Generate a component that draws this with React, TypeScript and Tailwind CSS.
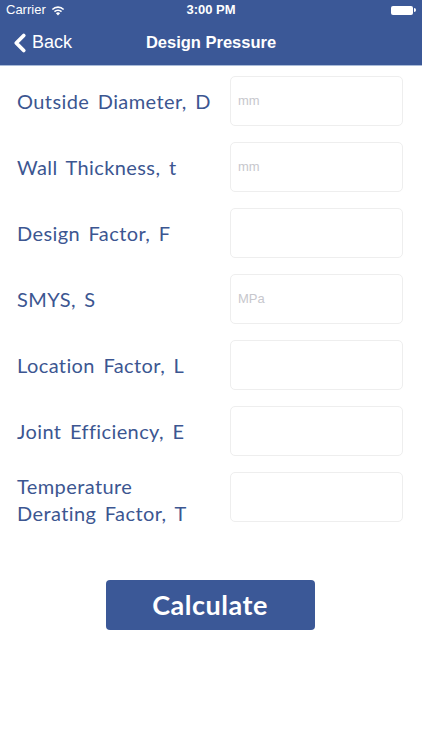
import { ChevronLeft } from "lucide-react";

const fields = [
  { label: "Outside Diameter, D", unit: "mm" },
  { label: "Wall Thickness, t", unit: "mm" },
  { label: "Design Factor, F", unit: "" },
  { label: "SMYS, S", unit: "MPa" },
  { label: "Location Factor, L", unit: "" },
  { label: "Joint Efficiency, E", unit: "" },
  { label: "Temperature\nDerating Factor, T", unit: "" },
];

function StatusBar() {
  return (
    <div className="relative flex h-5 items-center px-[6px] text-[13px] text-white" style={{ fontFamily: "Liberation Sans, Arial, sans-serif" }}>
      <div className="flex items-center gap-[5px]">
        <span>Carrier</span>
        <svg width="14" height="11" viewBox="0 0 14 11" fill="white">
          <path d="M7 10.5 4.9 8.2a3 3 0 0 1 4.2 0Z" />
          <path d="M2.9 6.1a5.8 5.8 0 0 1 8.2 0l-1.1 1.2a4.2 4.2 0 0 0-6 0Z" />
          <path d="M.8 3.9a8.8 8.8 0 0 1 12.4 0l-1.1 1.2a7.2 7.2 0 0 0-10.2 0Z" />
        </svg>
      </div>
      <span className="absolute left-1/2 -translate-x-1/2 font-bold">3:00 PM</span>
      <div className="ml-auto flex items-center">
        <div className="h-[9px] w-[22px] rounded-[2px] bg-white" />
        <div className="ml-[1px] h-[4px] w-[2px] rounded-r-sm bg-white" />
      </div>
    </div>
  );
}

export default function App() {
  return (
    <div className="min-h-[750px] bg-white">
      <header className="border-b border-[#a9bbd8] bg-[#3b5897]">
        <StatusBar />
        <div className="relative flex h-[45px] items-center text-white" style={{ fontFamily: "Liberation Sans, Arial, sans-serif" }}>
          <div className="flex items-center pl-[5px]">
            <ChevronLeft size={30} strokeWidth={3} className="-mr-[3px]" />
            <span className="text-[18px]">Back</span>
          </div>
          <span className="absolute left-1/2 -translate-x-1/2 text-[16.5px] font-bold">Design Pressure</span>
        </div>
      </header>

      <main className="flex flex-col gap-4 pl-[17px] pr-[19px] pt-[10px]">
        {fields.map((f) => (
          <div key={f.label} className="flex h-[50px] items-center justify-between">
            <span
              className={`whitespace-pre-line text-[20px] leading-[27px] tracking-[0.4px] text-[#3c5691] [word-spacing:3px] ${f.label.includes("\n") ? "mt-[5px]" : ""}`}
              style={{ fontFamily: "Lato, sans-serif" }}
            >
              {f.label}
            </span>
            <div className="flex h-[50px] w-[173px] items-center rounded-[5px] border border-[#eeeeee] px-[7px]">
              <span className="text-[13px] text-[#c7c7cd]" style={{ fontFamily: "Liberation Sans, Arial, sans-serif" }}>
                {f.unit}
              </span>
            </div>
          </div>
        ))}

        <div className="flex justify-center pt-[42px]">
          <button className="h-[50px] w-[209px] rounded-[4px] bg-[#3b5897] text-[27px] font-bold tracking-[0.5px] text-white" style={{ fontFamily: "Lato, sans-serif" }}>
            Calculate
          </button>
        </div>
      </main>
    </div>
  );
}
